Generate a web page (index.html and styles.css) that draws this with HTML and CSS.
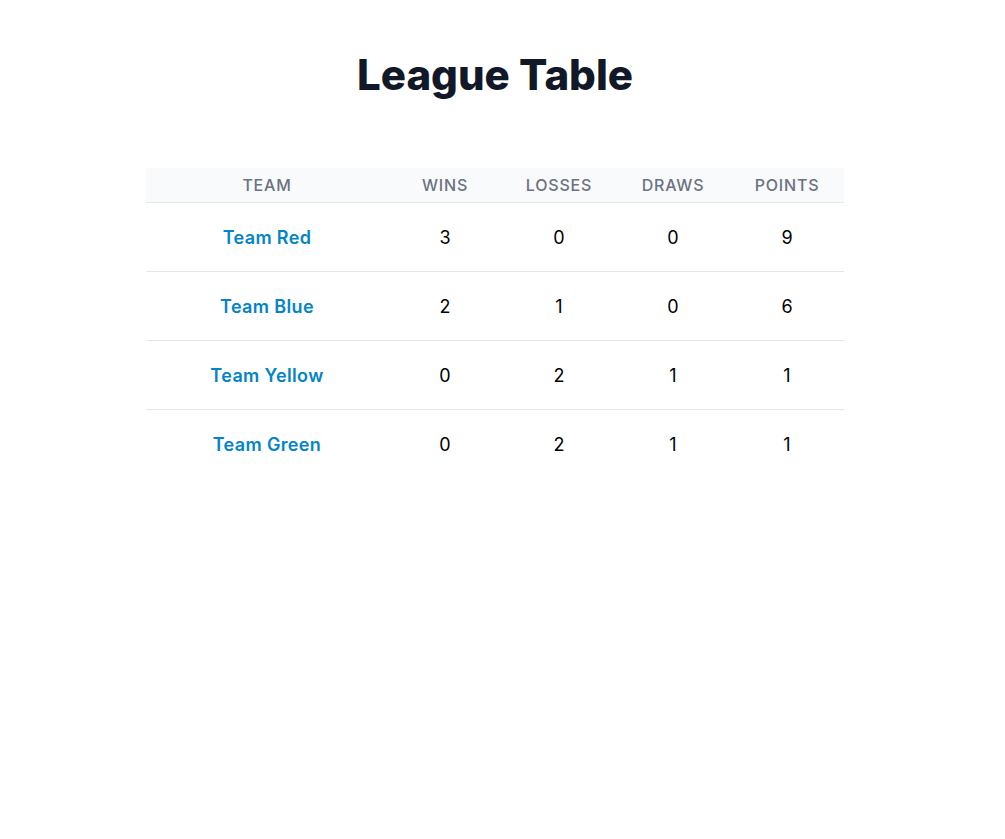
FILE: index.html
```html
<!DOCTYPE html>
<html lang="en">
<head>
<meta charset="utf-8">
<title>League Table</title>
<link rel="stylesheet" href="styles.css">
</head>
<body>
<main class="page">
  <h1 class="title">League Table</h1>
  <table class="league">
    <thead>
      <tr>
        <th class="col-team">Team</th>
        <th>Wins</th>
        <th>Losses</th>
        <th>Draws</th>
        <th>Points</th>
      </tr>
    </thead>
    <tbody>
      <tr><td class="team">Team Red</td><td>3</td><td>0</td><td>0</td><td>9</td></tr>
      <tr><td class="team">Team Blue</td><td>2</td><td>1</td><td>0</td><td>6</td></tr>
      <tr><td class="team">Team Yellow</td><td>0</td><td>2</td><td>1</td><td>1</td></tr>
      <tr><td class="team">Team Green</td><td>0</td><td>2</td><td>1</td><td>1</td></tr>
    </tbody>
  </table>
</main>
</body>
</html>
```
FILE: styles.css
```css
html, body {
  margin: 0;
  padding: 0;
  background: #ffffff;
}
body {
  font-family: Inter, "Noto Sans", "Liberation Sans", sans-serif;
}
.page {
  width: 990px;
  padding-top: 50px;
  display: flex;
  flex-direction: column;
  align-items: center;
}
.title {
  margin: 0;
  font-size: 42px;
  line-height: 50px;
  font-weight: 800;
  color: #111827;
}
.league {
  margin-top: 68px;
  width: 698px;
  border-collapse: collapse;
  table-layout: fixed;
}
.league th {
  background: #f9fafb;
  color: #6b7280;
  font-size: 16px;
  font-weight: 500;
  text-transform: uppercase;
  letter-spacing: 0.05em;
  height: 34px;
  padding: 0;
  text-align: center;
  border-bottom: 1px solid #e5e7eb;
  width: 114px;
}
.league th.col-team {
  width: 242px;
}
.league td {
  height: 68px;
  padding: 0;
  text-align: center;
  font-size: 18px;
  color: #000000;
  border-bottom: 1px solid #e5e7eb;
}
.league tbody tr:last-child td {
  border-bottom: none;
}
.league td.team {
  color: #0284c7;
  font-weight: 600;
  letter-spacing: 0.02em;
}
```
